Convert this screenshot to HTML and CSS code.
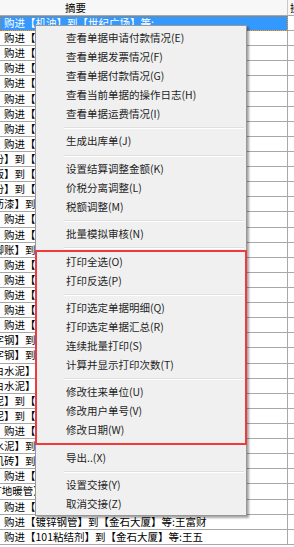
FILE: index.html
```html
<!DOCTYPE html>
<html lang="zh-CN">
<head>
<meta charset="utf-8">
<link rel="stylesheet" href="styles.css">
</head>
<body>
<div class="grid">
  <div class="head"><div class="hc1"><span class="htxt">摘要</span></div><div class="hc2">操作员</div></div>
  <div class="row sel"><div class="c1"><span class="t">购进【机油】到【世纪广场】等:</span></div><div class="c2"></div></div>
  <div class="row"><div class="c1"><span class="t">购进【钢筋】到【世纪广场】等:</span></div><div class="c2"></div></div>
  <div class="row"><div class="c1"><span class="t">购进【水泥】到【世纪广场】等:</span></div><div class="c2"></div></div>
  <div class="row"><div class="c1"><span class="t">购进【钢管】到【世纪广场】等:</span></div><div class="c2"></div></div>
  <div class="row"><div class="c1"><span class="t">购进【砂石】到【世纪广场】等:</span></div><div class="c2"></div></div>
  <div class="row"><div class="c1"><span class="t">购进【木材】到【世纪广场】等:</span></div><div class="c2"></div></div>
  <div class="row"><div class="c1"><span class="t">购进【油漆】到【世纪广场】等:</span></div><div class="c2"></div></div>
  <div class="row"><div class="c1"><span class="t">购进【电线】到【世纪广场】等:</span></div><div class="c2"></div></div>
  <div class="row"><div class="c1"><span class="t">购进【瓷砖】到【世纪广场】等:</span></div><div class="c2"></div></div>
  <div class="row"><div class="c1"><span class="t s1">份】到【世纪广场】等:</span></div><div class="c2"></div></div>
  <div class="row"><div class="c1"><span class="t s1">版】到【世纪广场】等:</span></div><div class="c2"></div></div>
  <div class="row"><div class="c1"><span class="t s1">份】到【世纪广场】等:</span></div><div class="c2"></div></div>
  <div class="row"><div class="c1"><span class="t s1">沥漆】到【世纪广场】等:</span></div><div class="c2"></div></div>
  <div class="row"><div class="c1"><span class="t">购进【石膏】到【世纪广场】等:</span></div><div class="c2"></div></div>
  <div class="row"><div class="c1"><span class="t">购进【玻璃】到【世纪广场】等:</span></div><div class="c2"></div></div>
  <div class="row"><div class="c1"><span class="t s1">脚账】到【世纪广场】等:</span></div><div class="c2"></div></div>
  <div class="row"><div class="c1"><span class="t">购进【螺栓】到【金石大厦】等:</span></div><div class="c2"></div></div>
  <div class="row"><div class="c1"><span class="t">购进【铁钉】到【金石大厦】等:</span></div><div class="c2"></div></div>
  <div class="row"><div class="c1"><span class="t">购进【涂料】到【金石大厦】等:</span></div><div class="c2"></div></div>
  <div class="row"><div class="c1"><span class="t">购进【管件】到【金石大厦】等:</span></div><div class="c2"></div></div>
  <div class="row"><div class="c1"><span class="t">购进【阀门】到【金石大厦】等:</span></div><div class="c2"></div></div>
  <div class="row"><div class="c1"><span class="t s1">字钢】到【金石大厦】等:</span></div><div class="c2"></div></div>
  <div class="row"><div class="c1"><span class="t s1">字钢】到【金石大厦】等:</span></div><div class="c2"></div></div>
  <div class="row"><div class="c1"><span class="t s1">白水泥】到【金石大厦】等:</span></div><div class="c2"></div></div>
  <div class="row"><div class="c1"><span class="t s1">白水泥】到【金石大厦】等:</span></div><div class="c2"></div></div>
  <div class="row"><div class="c1"><span class="t s1">泥】到【金石大厦】等:</span></div><div class="c2"></div></div>
  <div class="row"><div class="c1"><span class="t s1">泥】到【金石大厦】等:</span></div><div class="c2"></div></div>
  <div class="row"><div class="c1"><span class="t">购进【石灰】到【金石大厦】等:</span></div><div class="c2"></div></div>
  <div class="row"><div class="c1"><span class="t s1">水泥】到【金石大厦】等:</span></div><div class="c2"></div></div>
  <div class="row"><div class="c1"><span class="t s1">机砖】到【金石大厦】等:</span></div><div class="c2"></div></div>
  <div class="row"><div class="c1"><span class="t">购进【河沙】到【金石大厦】等:</span></div><div class="c2"></div></div>
  <div class="row"><div class="c1"><span class="t s2">PERT地暖管】到【金石大厦】等:</span></div><div class="c2"></div></div>
  <div class="row"><div class="c1"><span class="t">购进【石材】到【金石大厦】等:</span></div><div class="c2"></div></div>
  <div class="row"><div class="c1"><span class="t">购进【镀锌钢管】到【金石大厦】等:王富财</span></div><div class="c2"></div></div>
  <div class="row"><div class="c1"><span class="t">购进【101粘结剂】到【金石大厦】等:王五</span></div><div class="c2"></div></div>
</div>

<div class="menu">
  <div class="item">查看单据申请付款情况(E)</div>
  <div class="item">查看单据发票情况(F)</div>
  <div class="item">查看单据付款情况(G)</div>
  <div class="item">查看当前单据的操作日志(H)</div>
  <div class="item">查看单据运费情况(I)</div>
  <div class="sep"></div>
  <div class="item">生成出库单(J)</div>
  <div class="sep"></div>
  <div class="item">设置结算调整金额(K)</div>
  <div class="item">价税分离调整(L)</div>
  <div class="item">税额调整(M)</div>
  <div class="sep"></div>
  <div class="item">批量模拟审核(N)</div>
  <div class="sep"></div>
  <div class="item">打印全选(O)</div>
  <div class="item">打印反选(P)</div>
  <div class="sep"></div>
  <div class="item">打印选定单据明细(Q)</div>
  <div class="item">打印选定单据汇总(R)</div>
  <div class="item">连续批量打印(S)</div>
  <div class="item">计算并显示打印次数(T)</div>
  <div class="sep"></div>
  <div class="item">修改往来单位(U)</div>
  <div class="item">修改用户单号(V)</div>
  <div class="item">修改日期(W)</div>
  <div class="sep"></div>
  <div class="item">导出..(X)</div>
  <div class="sep"></div>
  <div class="item">设置交接(Y)</div>
  <div class="item">取消交接(Z)</div>
</div>

<div class="mark"></div>
</body>
</html>
```

FILE: styles.css
```css
html, body {
  margin: 0;
  padding: 0;
}
body {
  width: 294px;
  height: 547px;
  overflow: hidden;
  position: relative;
  background: #ffffff;
  font-family: "Noto Sans CJK SC", "Noto Sans", sans-serif;
  font-size: 10.5px;
  color: #000;
}
.grid {
  display: flex;
  flex-direction: column;
}
.head {
  display: flex;
  height: 16px;
  flex: none;
  box-sizing: border-box;
  background: #f7f7f7;
  border-bottom: 1px solid #a8a8a8;
}
.hc1 {
  width: 288px;
  flex: none;
  box-sizing: border-box;
  border-right: 1px solid #c8c8c8;
  line-height: 15px;
  padding-left: 65px;
}
.hc2 {
  flex: 1;
  overflow: hidden;
  white-space: nowrap;
  line-height: 15px;
  padding-left: 2px;
}
.row {
  display: flex;
  height: 15.12px;
  flex: none;
}
.c1 {
  width: 288px;
  flex: none;
  box-sizing: border-box;
  border-right: 1px solid #a8a8a8;
  border-bottom: 1px solid #a8a8a8;
  overflow: hidden;
  white-space: nowrap;
  line-height: 14px;
}
.c2 {
  flex: 1;
  box-sizing: border-box;
  border-bottom: 1px solid #a8a8a8;
}
.t {
  display: inline-block;
  margin-left: 4px;
}
.t.s1 {
  margin-left: -6.5px;
}
.t.s2 {
  margin-left: -24px;
}
.sel .c1 {
  background: #3399ff;
  color: #fff;
  outline: 1px dotted #c27a2c;
  outline-offset: -1px;
}

.menu {
  position: absolute;
  left: 35px;
  top: 25px;
  width: 212px;
  box-sizing: border-box;
  background: #f0f0f0;
  border: 1px solid #979797;
  box-shadow: 2px 2px 2px rgba(0, 0, 0, 0.35);
  padding: 3px 2px 1px;
  color: #1e1e1e;
}
.item {
  height: 19px;
  line-height: 18px;
  padding-left: 28px;
  white-space: nowrap;
}
.sep {
  height: 0;
  margin: 3.2px 0 3.2px 26px;
  border-top: 1px solid #e0e0e0;
  border-bottom: 1px solid #ffffff;
}
.mark {
  position: absolute;
  left: 35px;
  top: 250px;
  width: 212px;
  height: 195px;
  box-sizing: border-box;
  border: 2px solid #ef3b3b;
}
```
